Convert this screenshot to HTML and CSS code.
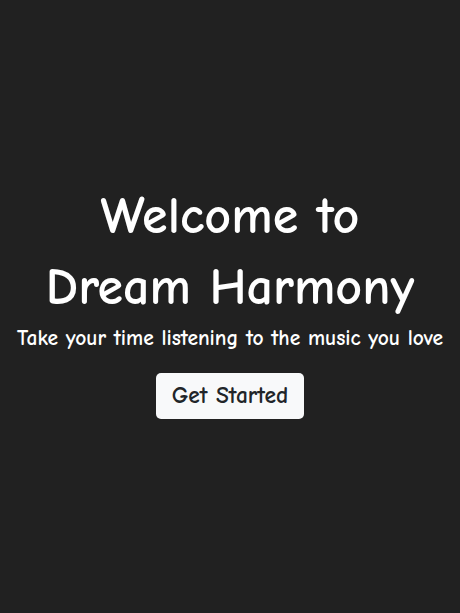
FILE: index.html
```html
<!DOCTYPE html>
<html lang="en">
<head>
<meta charset="utf-8">
<title>Dream Harmony</title>
<link rel="stylesheet" href="styles.css">
</head>
<body>
<main class="hero">
  <h1 class="hero-title">Welcome to<br>Dream Harmony</h1>
  <p class="hero-lead">Take your time listening to the music you love</p>
  <a class="hero-btn" href="#">Get Started</a>
</main>
</body>
</html>
```

FILE: styles.css
```css
html, body {
  margin: 0;
  padding: 0;
  background: #212121;
}
body {
  font-family: "Comic Sans MS", "Comic Neue", cursive;
  color: #ffffff;
}
.hero {
  min-height: 100vh;
  display: flex;
  flex-direction: column;
  align-items: center;
  justify-content: center;
  text-align: center;
  box-sizing: border-box;
  padding-bottom: 14px;
}
.hero-title {
  margin: 0;
  font-size: 52px;
  font-weight: 700;
  line-height: 71px;
}
.hero-lead {
  margin: 0 0 20px;
  font-size: 21.5px;
  font-weight: 700;
  line-height: 30px;
}
.hero-btn {
  display: inline-block;
  padding: 8px 16px;
  font-size: 23.5px;
  font-weight: 700;
  line-height: 30px;
  color: #212529;
  background: #f8f9fa;
  border-radius: 5px;
  text-decoration: none;
}
```
